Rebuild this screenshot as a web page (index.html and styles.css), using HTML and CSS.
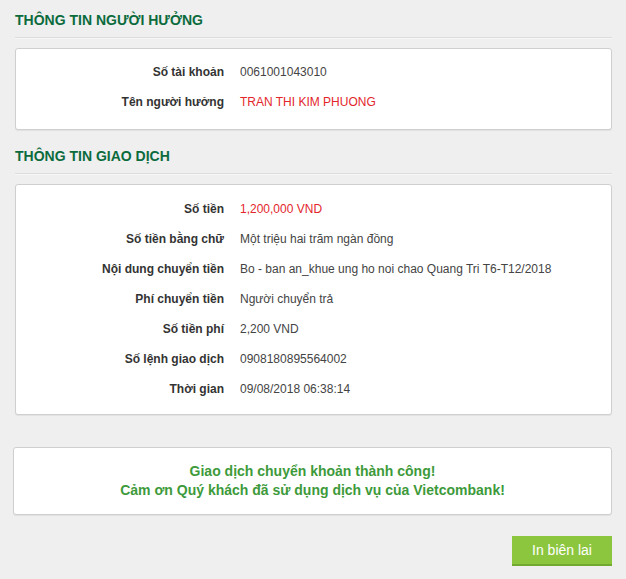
FILE: index.html
```html
<!DOCTYPE html>
<html lang="vi">
<head>
<meta charset="utf-8">
<link rel="stylesheet" href="styles.css">
</head>
<body>
<div class="page">
  <h2 class="section-title">THÔNG TIN NGƯỜI HƯỞNG</h2>
  <div class="card card-first">
    <div class="row"><span class="label">Số tài khoản</span><span class="value">0061001043010</span></div>
    <div class="row"><span class="label">Tên người hưởng</span><span class="value red">TRAN THI KIM PHUONG</span></div>
  </div>

  <h2 class="section-title second">THÔNG TIN GIAO DỊCH</h2>
  <div class="card card-second">
    <div class="row"><span class="label">Số tiền</span><span class="value red">1,200,000 VND</span></div>
    <div class="row"><span class="label">Số tiền bằng chữ</span><span class="value">Một triệu hai trăm ngàn đồng</span></div>
    <div class="row"><span class="label">Nội dung chuyển tiền</span><span class="value">Bo - ban an_khue ung ho noi chao Quang Tri T6-T12/2018</span></div>
    <div class="row"><span class="label">Phí chuyển tiền</span><span class="value">Người chuyển trả</span></div>
    <div class="row"><span class="label">Số tiền phí</span><span class="value">2,200 VND</span></div>
    <div class="row"><span class="label">Số lệnh giao dịch</span><span class="value">0908180895564002</span></div>
    <div class="row"><span class="label">Thời gian</span><span class="value">09/08/2018 06:38:14</span></div>
  </div>

  <div class="message">
    <p>Giao dịch chuyển khoản thành công!</p>
    <p>Cảm ơn Quý khách đã sử dụng dịch vụ của Vietcombank!</p>
  </div>

  <div class="actions">
    <button class="btn" type="button">In biên lai</button>
  </div>
</div>
</body>
</html>
```

FILE: styles.css
```css
html, body {
  margin: 0;
  padding: 0;
  background: #efefef;
}

body {
  font-family: "Liberation Sans", Arial, sans-serif;
  font-size: 12px;
  color: #333;
}

.page {
  padding: 11px 14px 0 15px;
}

.section-title {
  margin: 0;
  font-size: 14px;
  font-weight: bold;
  line-height: 18px;
  color: #0c6b3d;
  padding-bottom: 8px;
  border-bottom: 1px solid #dcdcdc;
  box-shadow: 0 1px 0 #f7f7f7;
}

.section-title.second {
  margin-top: 17px;
}

.card {
  margin-top: 10px;
  background: #fff;
  border: 1px solid #cfcfcf;
  border-radius: 3px;
  box-shadow: 0 1px 1px rgba(0, 0, 0, 0.06);
}

.card-first {
  padding: 8px 0 12px;
}

.card-second {
  padding: 9px 0 10px;
}

.row {
  display: grid;
  grid-template-columns: 208px 1fr;
  column-gap: 16px;
  line-height: 30px;
}

.label {
  text-align: right;
  font-weight: bold;
  color: #333;
}

.value {
  color: #444;
}

.value.red {
  color: #e3262b;
}

.message {
  margin-top: 32px;
  margin-left: -2px;
  background: #fff;
  border: 1px solid #cfcfcf;
  border-radius: 3px;
  box-shadow: 0 1px 1px rgba(0, 0, 0, 0.06);
  padding: 14px 0;
  text-align: center;
}

.message p {
  margin: 0;
  font-size: 14px;
  font-weight: bold;
  line-height: 19px;
  color: #3d9a3a;
}

.actions {
  display: flex;
  justify-content: flex-end;
  margin-top: 21px;
}

.btn {
  width: 100px;
  height: 30px;
  border: 0;
  border-bottom: 2px solid #72a92e;
  background: #8cc63f;
  color: #fff;
  font-family: "Liberation Sans", Arial, sans-serif;
  font-size: 14px;
  padding: 0;
  cursor: pointer;
}
```
